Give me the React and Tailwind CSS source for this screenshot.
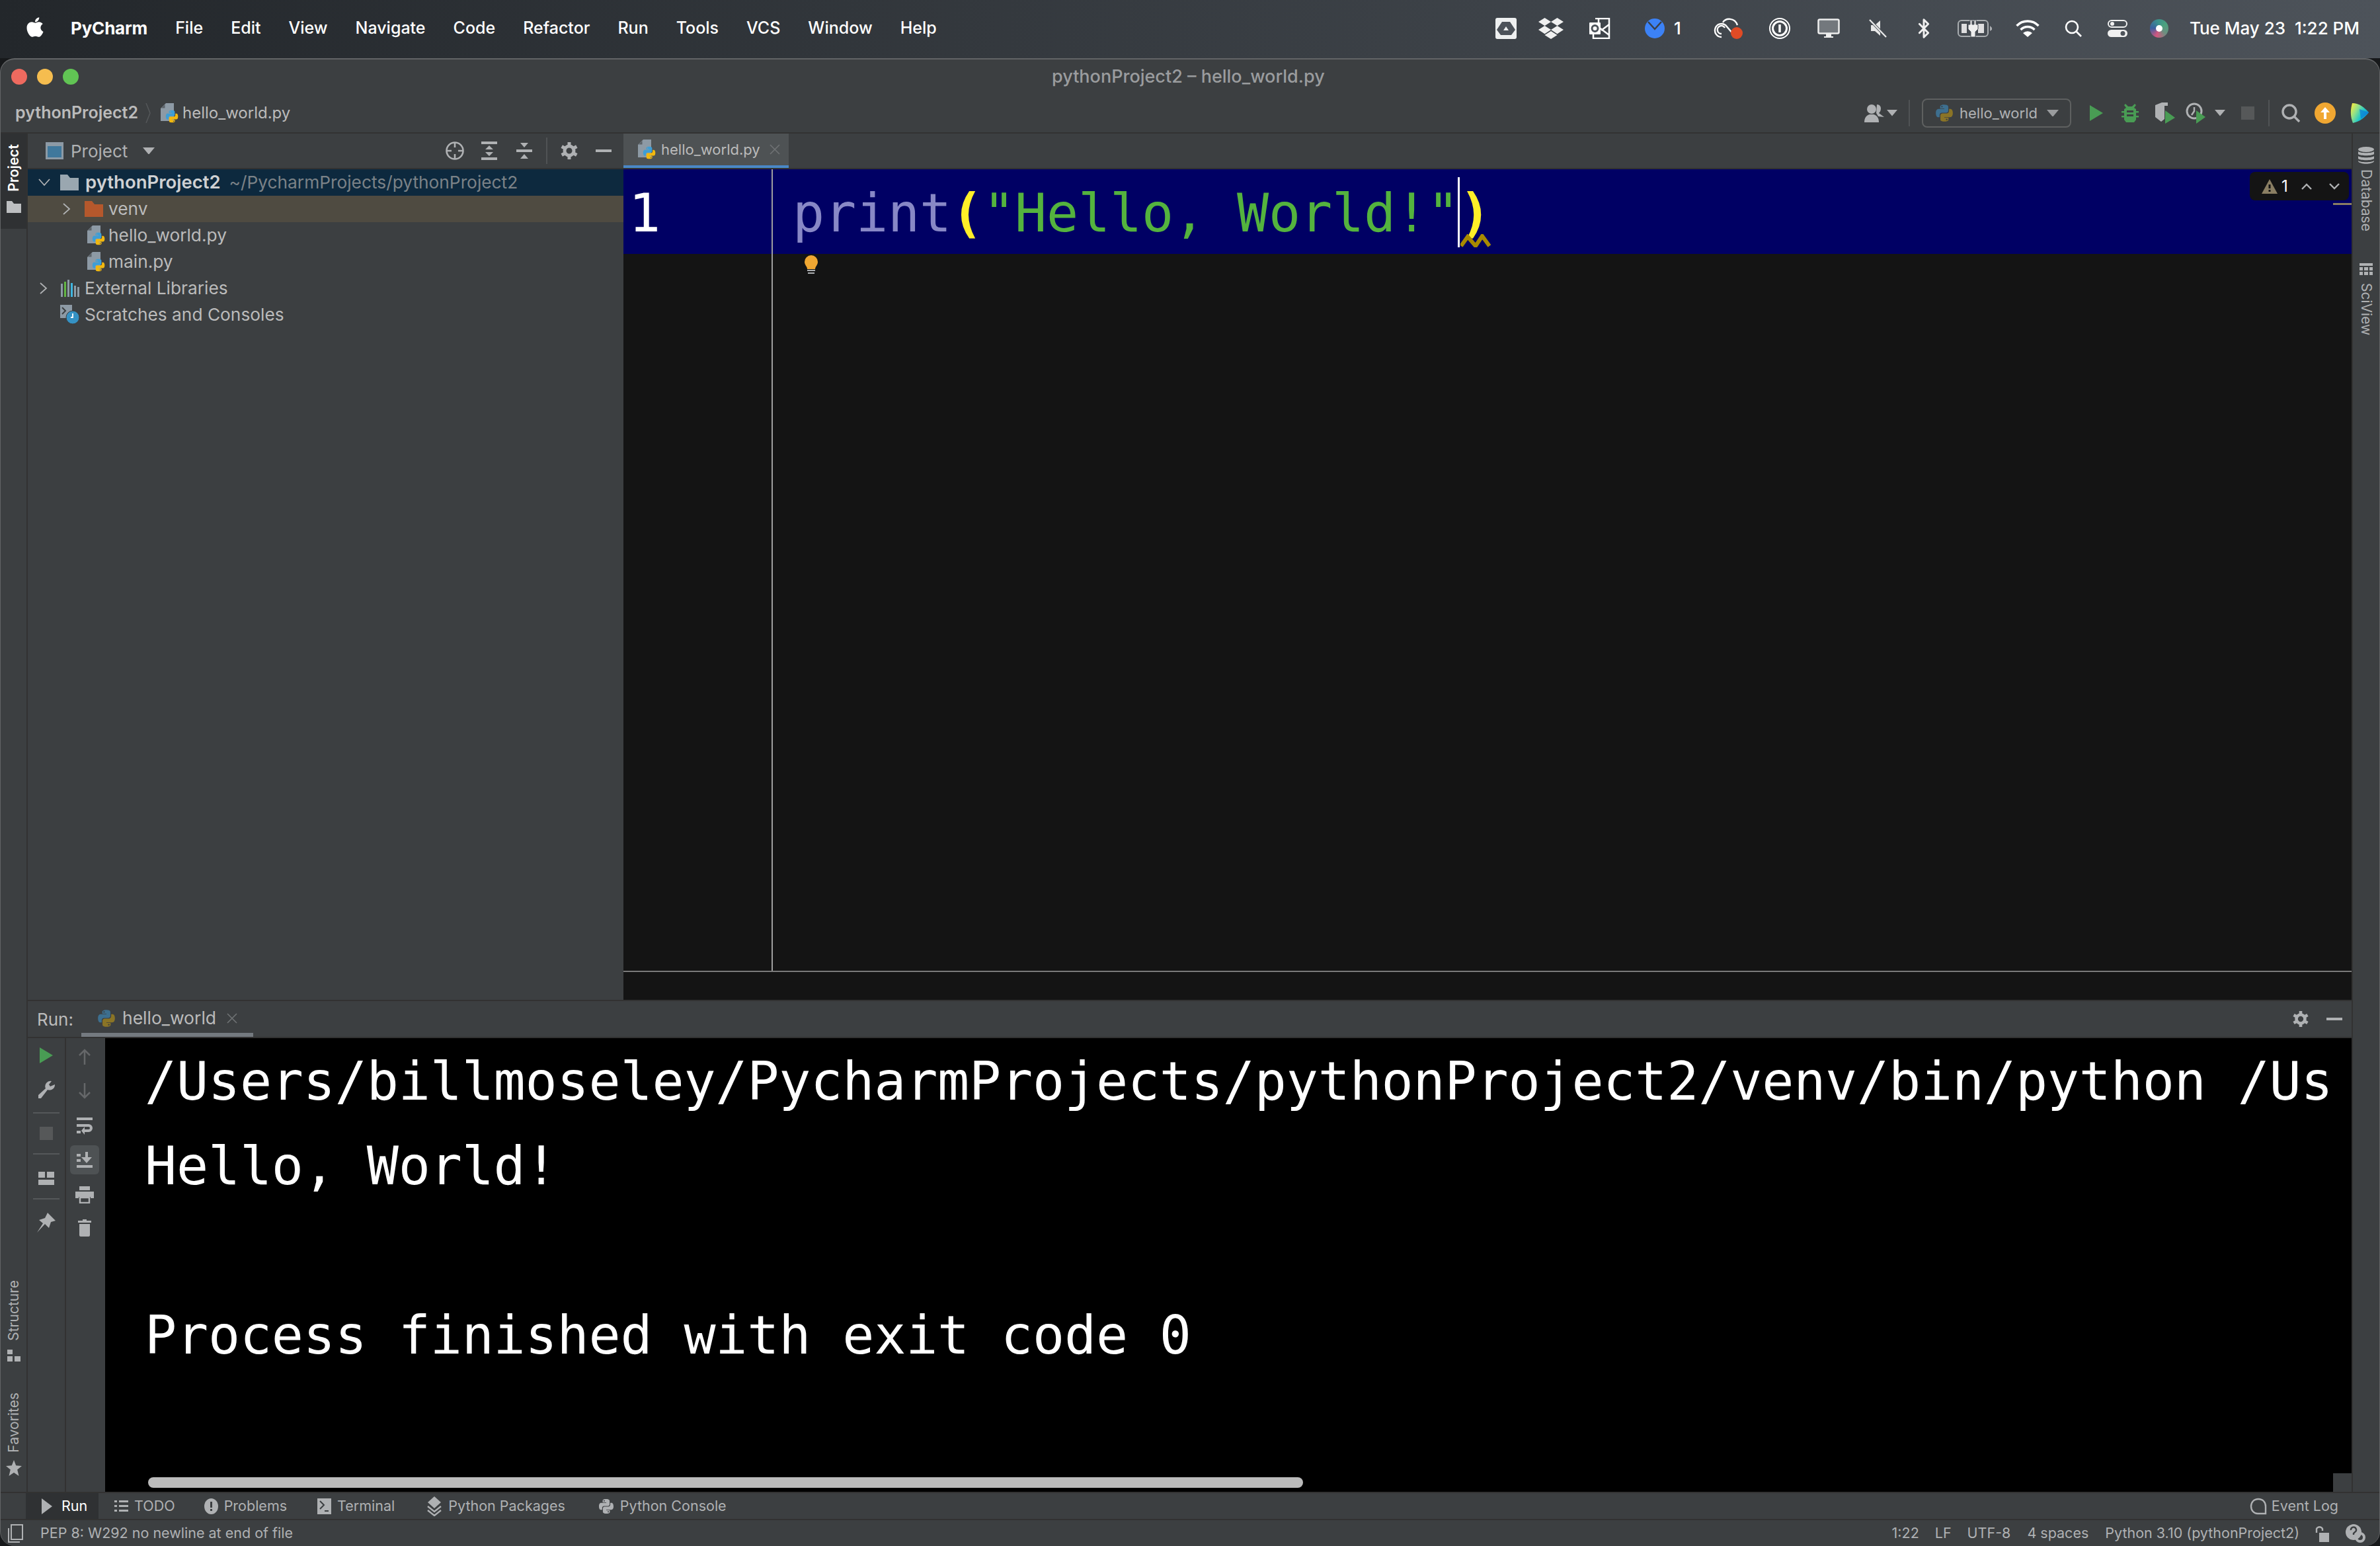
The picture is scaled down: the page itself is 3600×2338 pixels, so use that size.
import React from 'react';
import { FaApple, FaDropbox } from 'react-icons/fa';
import { Bluetooth } from 'lucide-react';

const Snake = ({ c }) => (
  <path fill={c} d="M11.9 1C6.3 1 6.6 3.4 6.6 3.4v2.5h5.4v.8H4.5S1 6.3 1 11.9s3.1 5.4 3.1 5.4h1.8v-2.6s-.1-3.1 3-3.1h5.3s2.9 0 2.9-2.8V3.9S17.6 1 11.9 1zM8.9 2.7a1 1 0 1 1 0 2 1 1 0 0 1 0-2z" />
);
const Py = ({ size = 28, a = '#3d6f8f', b = '#8a7426', className = '' }) => (
  <svg width={size} height={size} viewBox="0 0 24 24" className={className}>
    <Snake c={a} />
    <g transform="rotate(180 12 12)"><Snake c={b} /></g>
  </svg>
);
const PyFile = ({ className = '' }) => (
  <svg width="27" height="30" viewBox="0 0 27 30" className={className}>
    <path fill="#8d9aa5" d="M8 0h12v27H0V8z" />
    <path fill="#3c3f41" d="M6.500 2v5.500H1z" opacity="0.6" />
    <g transform="translate(7 10) scale(0.84)">
      <Snake c="#3d9ed6" />
      <g transform="rotate(180 12 12)"><Snake c="#f1b80f" /></g>
    </g>
  </svg>
);
const Arrow = ({ className = '', w = 18, c = '#afb1b3' }) => (
  <svg width={w} height={w * 0.6} viewBox="0 0 10 6" className={className}><path fill={c} d="M0 0h10L5 6z" /></svg>
);
const ChevronDown = ({ className = '' }) => (
  <svg width="18" height="12" viewBox="0 0 18 12" className={className} fill="none" stroke="#afb1b3" strokeWidth="1.800"><path d="M1 1l8 9 8-9" /></svg>
);
const ChevronRight = ({ className = '' }) => (
  <svg width="12" height="18" viewBox="0 0 12 18" className={className} fill="none" stroke="#afb1b3" strokeWidth="1.800"><path d="M1 1l9 8-9 8" /></svg>
);
const Gear = ({ s = 26, className = '' }) => (
  <svg width={s} height={s} viewBox="0 0 26 26" className={className}>
    <circle cx="13" cy="13" r="7" fill="none" stroke="#afb1b3" strokeWidth="5" />
    <g stroke="#afb1b3" strokeWidth="5">
      <path d="M13 0v5M13 21v5M1.700 6.500L6 9M20 17l4.300 2.500M1.700 19.500L6 17M20 9l4.300-2.500" />
    </g>
  </svg>
);
const Minus = ({ className = '' }) => <div className={`w-6 h-1 bg-[#afb1b3] ${className}`} />;
const Folder = ({ c = '#9aa7b0', className = '' }) => (
  <svg width="28" height="24" viewBox="0 0 28 24" className={className}><path fill={c} d="M0 0h11l4 5h13v19H0z" /></svg>
);

function MenuBar() {
  const items = ['File', 'Edit', 'View', 'Navigate', 'Code', 'Refactor', 'Run', 'Tools', 'VCS', 'Window', 'Help'];
  return (
    <div className="h-[88px] shrink-0 flex items-center text-white text-[25px] font-medium bg-gradient-to-r from-[#23272b] to-[#4d535a] pb-[3px]">
      <FaApple className="ml-[36px] text-[34px] mb-1" />
      <span className="ml-[37px] font-bold text-[26px] tracking-[-0.2px]">PyCharm</span>
      {items.map((t) => <span key={t} className="ml-[42px]">{t}</span>)}
      <div className="ml-auto flex items-center">
        <svg width="32" height="32" viewBox="0 0 32 32"><rect width="32" height="32" rx="3" fill="#eef0f0" /><path fill="#4d535a" d="M10 6h12l8 12-6 8H8l-6-8z" /><path fill="#eef0f0" d="M16 13l4 6h-8z" /></svg>
        <FaDropbox className="ml-[33px] text-[38px] text-[#f0f0f0]" />
        <svg width="32" height="32" viewBox="0 0 32 32" className="ml-[39px]" fill="none" stroke="#fff" strokeWidth="2.500"><path d="M9 1h21v30H6V20" /><path d="M14 1v10M14 14l16 12M30 10L18 19" /><rect x="0" y="7" width="17" height="18" rx="1" fill="#fff" stroke="none" /><circle cx="8.500" cy="16" r="4.500" stroke="#4d535a" strokeWidth="3" /></svg>
        <svg width="30" height="30" viewBox="0 0 30 30" className="ml-[52px]"><circle cx="15" cy="15" r="15" fill="#3c82f6" /><path d="M5 5l10 11L25 5" fill="none" stroke="#3a3f46" strokeWidth="2.500" /></svg>
        <span className="ml-[14px] w-[14px] text-[26px]">1</span>
        <svg width="48" height="34" viewBox="0 0 48 34" className="ml-[46px]" fill="none" stroke="#fff" strokeWidth="2.400"><path d="M12 30a10 10 0 1 1 6-18l12 14" /><path d="M12 25a6 6 0 1 1 5-9" /><path d="M14 8c4-7 18-8 22 4" /><circle cx="35" cy="24" r="9" fill="#e04b25" stroke="none" /></svg>
        <svg width="32" height="32" viewBox="0 0 32 32" className="ml-[36px]" fill="none" stroke="#fff"><circle cx="16" cy="16" r="15" strokeWidth="2" /><circle cx="16" cy="16" r="10.500" strokeWidth="3" /><path d="M16 10v12" strokeWidth="3.500" /></svg>
        <svg width="34" height="30" viewBox="0 0 34 30" className="ml-[41px]"><rect x="1.500" y="1.500" width="31" height="21" rx="2" fill="#73787d" stroke="#eee" strokeWidth="2.500" /><path fill="#eee" d="M13 23h8v4h3v2H10v-2h3z" /></svg>
        <svg width="28" height="28" viewBox="0 0 28 28" className="ml-[44px]"><path fill="#e8e8e8" d="M3 9h6l8-7v23l-8-7H3z" /><path d="M1 1l25 26" stroke="#4d535a" strokeWidth="4" /><path d="M1 1l25 26" stroke="#eee" strokeWidth="2" /></svg>
        <Bluetooth size={32} color="#f0f0f0" strokeWidth={2.2} className="ml-[39px]" />
        <svg width="52" height="26" viewBox="0 0 52 26" className="ml-[35px]"><rect x="1" y="1" width="45" height="24" rx="5" fill="none" stroke="#a9adb0" strokeWidth="2" /><path fill="#a9adb0" d="M49 9l3 3v3l-3 2z" /><path fill="#eee" d="M6 6h8v14H6zM31 6h9v14h-9z" opacity="0.9" /><path fill="#eee" stroke="#4d535a" strokeWidth="1" d="M19 0h3v7h3V0h3v7h3v7l-4 4v8h-7v-8l-4-4V7h3z" /></svg>
        <svg width="36" height="26" viewBox="0 0 36 26" className="ml-[36px]" fill="none" stroke="#fff" strokeWidth="3.400"><path d="M1.500 9a23 23 0 0 1 33 0" /><path d="M7.500 15a14.500 14.500 0 0 1 21 0" /><path fill="#fff" stroke="none" d="M11 20a10 10 0 0 1 14 0l-7 6z" /></svg>
        <svg width="26" height="26" viewBox="0 0 26 26" className="ml-[38px]" fill="none" stroke="#fff" strokeWidth="2.600"><circle cx="11" cy="11" r="9" /><path d="M17 17l8 8" /></svg>
        <svg width="30" height="26" viewBox="0 0 30 26" className="ml-[39px]"><rect x="1" y="1" width="28" height="10" rx="5" fill="none" stroke="#f0f0f0" strokeWidth="2" /><circle cx="7" cy="6" r="3" fill="#f0f0f0" /><rect y="15" width="30" height="11" rx="5.500" fill="#f0f0f0" /><circle cx="23" cy="20.500" r="3.500" fill="#4d535a" /></svg>
        <div className="ml-[34px] w-[28px] h-[28px] rounded-full bg-[conic-gradient(from_200deg,#d4577f,#3b5f9f,#3b8f8f,#4ba27e,#6b8f7f,#d4577f)] flex items-center justify-center">
          <div className="w-[10px] h-[10px] rounded-full bg-white" />
        </div>
        <span className="ml-[32px] mr-[31px] whitespace-pre text-[26px]">Tue May 23  1:22 PM</span>
      </div>
    </div>
  );
}

function NavBar() {
  return (
    <div className="h-[58px] shrink-0 flex items-center border-b-2 border-[#323232] box-content text-[24px] text-[#bbbbbb]">
      <span className="ml-[22px] font-semibold text-[25px]">pythonProject2</span>
      <svg width="8" height="30" viewBox="0 0 8 30" className="ml-[11px]" fill="none" stroke="#55585a" strokeWidth="1.500"><path d="M1 0l6 15-6 15" /></svg>
      <PyFile className="ml-[15px]" />
      <span className="ml-[6px]">hello_world.py</span>
      <div className="ml-auto flex items-center h-full">
        <svg width="30" height="28" viewBox="0 0 30 28"><circle cx="11" cy="8" r="7" fill="#afb1b3" /><path fill="#afb1b3" d="M0 28c0-8 4-11 8-12h6c4 1 8 4 8 12z" /><path fill="#afb1b3" d="M19 1c4 0 6 3 6 6 0 3-1 5-3 7l8 6-9-1-3-5z" /></svg>
        <Arrow className="ml-[4px]" w={16} />
        <div className="ml-[17px] w-[2px] h-[40px] bg-[#505355]" />
        <div className="ml-[18px] w-[226px] h-[44px] rounded-lg border-2 border-[#5e6060] flex items-center">
          <Py className="ml-[18px]" />
          <span className="ml-[9px] text-[22px] text-[#b0b2b4]">hello_world</span>
          <Arrow className="ml-auto mr-[17px]" w={18} c="#9a9c9e" />
        </div>
        <svg width="20" height="24" viewBox="0 0 20 24" className="ml-[28px]"><path fill="#499c54" d="M0 0l20 12L0 24z" /></svg>
        <svg width="26" height="28" viewBox="0 0 26 28" className="ml-[28px]" fill="#499c54"><path d="M6 0l4 4h6l4-4 2 2-3 4 3 2v16l-3 4H7l-3-4V8l3-2-3-4z" /><path d="M0 11h26v2.500H0zM0 18h26v2.500H0z" /><path d="M8 10h10v3H8zM8 16h10v3H8z" fill="#3c3f41" /></svg>
        <svg width="30" height="32" viewBox="0 0 30 32" className="ml-[25px]"><path fill="#afb1b3" d="M0 4l10-4h9v5h-5v20l-5 4-9-7z" /><path fill="#499c54" d="M15 12l15 11-15 9z" /></svg>
        <svg width="30" height="32" viewBox="0 0 30 32" className="ml-[16px]"><circle cx="13" cy="13" r="11" fill="none" stroke="#afb1b3" strokeWidth="3" /><path d="M13 7v6l-4 6" fill="none" stroke="#afb1b3" strokeWidth="2.500" /><path fill="#499c54" d="M16 12l14 10-14 10z" /></svg>
        <Arrow className="ml-[14px]" w={16} />
        <div className="ml-[24px] w-[20px] h-[20px] bg-[#565859]" />
        <div className="ml-[21px] w-[2px] h-[40px] bg-[#505355]" />
        <svg width="28" height="28" viewBox="0 0 28 28" className="ml-[18px]" fill="none" stroke="#afb1b3" strokeWidth="3.400"><circle cx="12" cy="12" r="10" /><path d="M19 19l8 8" /></svg>
        <svg width="32" height="32" viewBox="0 0 32 32" className="ml-[22px]"><circle cx="16" cy="16" r="16" fill="#f0a732" /><path fill="#fff" d="M16 7l7 8h-5v10h-4V15H9z" /></svg>
        <svg width="28" height="30" viewBox="0 0 28 30" className="ml-[22px] mr-[16px]"><defs><linearGradient id="tb" x1="0" y1="0.1" x2="1" y2="0.7"><stop offset="0" stopColor="#f7ec3e" /><stop offset="0.35" stopColor="#8fe08a" /><stop offset="0.65" stopColor="#1fc8c8" /><stop offset="1" stopColor="#0b7fd8" /></linearGradient></defs><path fill="url(#tb)" d="M3 0c10 0 18 6 25 14-6 8-14 14-24 16C0 20 0 10 3 0z" /><path fill="#0b7fd8" d="M14 9l14 5-12 10z" opacity="0.75" /></svg>
      </div>
    </div>
  );
}

function TreeRow({ bg = '', children }) {
  return <div className={`h-[40px] flex items-center text-[26.3px] text-[#bbbbbb] ${bg}`}>{children}</div>;
}

function ProjectPanel() {
  return (
    <div className="w-[901px] shrink-0 flex flex-col">
      <div className="h-[54px] shrink-0 flex items-center border-b-2 border-[#323232] box-border text-[26px] text-[#afb1b3]">
        <svg width="27" height="26" viewBox="0 0 27 26" className="ml-[27px]"><rect width="27" height="26" fill="#8d9aa5" /><rect x="3" y="6" width="21" height="17" fill="#40789c" /></svg>
        <span className="ml-[11px]">Project</span>
        <Arrow className="ml-[23px]" w={18} />
        <svg width="28" height="28" viewBox="0 0 28 28" className="ml-[440px]" fill="none" stroke="#afb1b3" strokeWidth="2.600"><circle cx="14" cy="14" r="12.500" /><path d="M14 1v8M14 19v8M1 14h8M19 14h8" /></svg>
        <svg width="24" height="28" viewBox="0 0 24 28" className="ml-[26px]" fill="#afb1b3"><path d="M0 0h24v4H0zM0 24h24v4H0zM12 6l6 6H6zM12 22l-6-6h12z" /></svg>
        <svg width="24" height="28" viewBox="0 0 24 28" className="ml-[29px]" fill="#afb1b3"><path d="M0 12h24v4H0zM6 2h12l-6 7zM12 19l6 7H6z" /></svg>
        <div className="ml-[21px] w-[2px] h-[40px] bg-[#505355]" />
        <Gear className="ml-[20px]" />
        <Minus className="ml-[27px]" />
      </div>
      <div className="flex-1 flex flex-col">
        <TreeRow bg="bg-[#0d293e]">
          <ChevronDown className="ml-[16px]" />
          <Folder className="ml-[15px]" />
          <span className="ml-[10px] font-semibold text-[27.500px] text-[#cfd1d3]">pythonProject2</span>
          <span className="ml-[13px] text-[#7b8287]">~/PycharmProjects/pythonProject2</span>
        </TreeRow>
        <TreeRow bg="bg-[#4f4b41]">
          <ChevronRight className="ml-[53px]" />
          <Folder c="#b5582c" className="ml-[21px]" />
          <span className="ml-[8px]">venv</span>
        </TreeRow>
        <TreeRow><PyFile className="ml-[90px]" /><span className="ml-[5px]">hello_world.py</span></TreeRow>
        <TreeRow><PyFile className="ml-[90px]" /><span className="ml-[5px]">main.py</span></TreeRow>
        <TreeRow>
          <ChevronRight className="ml-[18px]" />
          <svg width="28" height="26" viewBox="0 0 28 26" className="ml-[20px]"><rect x="0" y="6" width="3" height="20" fill="#8d9aa5" /><rect x="5" y="3" width="3" height="23" fill="#62b543" /><rect x="10" y="0" width="3" height="26" fill="#8d9aa5" /><rect x="15" y="5" width="3" height="21" fill="#40b6e0" /><rect x="20" y="9" width="3" height="17" fill="#8d9aa5" /><rect x="25" y="11" width="3" height="15" fill="#8d9aa5" /></svg>
          <span className="ml-[8px]">External Libraries</span>
        </TreeRow>
        <TreeRow>
          <svg width="30" height="30" viewBox="0 0 30 30" className="ml-[49px]"><path fill="#8d9aa5" d="M0 0h18v20H0z" /><path d="M3 4l5 5-5 5" fill="none" stroke="#3c3f41" strokeWidth="2" /><circle cx="19" cy="19" r="10" fill="#3592c4" stroke="#3c3f41" strokeWidth="1" /><path d="M19 13v6h-3" fill="none" stroke="#fff" strokeWidth="1.800" /></svg>
          <span className="ml-[7px]">Scratches and Consoles</span>
        </TreeRow>
      </div>
    </div>
  );
}

function Editor() {
  return (
    <div className="flex-1 min-w-0 flex flex-col">
      <div className="h-[54px] shrink-0 flex border-b-2 border-[#323232] box-border">
        <div className="w-[250px] bg-[#4e5254] border-b-[4px] border-[#4a88c7] flex items-center text-[22px] text-[#bbbbbb]">
          <PyFile className="ml-[22px]" />
          <span className="ml-[8px]">hello_world.py</span>
          <svg width="16" height="16" viewBox="0 0 16 16" className="ml-[14px]" stroke="#6f7274" strokeWidth="1.600"><path d="M1 1l14 14M15 1L1 15" /></svg>
        </div>
      </div>
      <div className="relative flex-1 bg-[#141414] flex flex-col font-['DejaVu_Sans_Mono',monospace] text-[80px] tracking-[-0.16px]">
        <div className="h-[128px] shrink-0 bg-[#000064] flex leading-[134px]">
          <div className="w-[226px] shrink-0 border-r-2 border-[#a0a0a0] pl-[8px] text-white">1</div>
          <div className="pl-[30px] relative whitespace-pre">
            <span className="text-[#8888c6]">print</span><span className="text-[#ffef28] font-bold">(</span><span className="text-[#54b33e]">"Hello, World!"</span><span className="text-[#ffef28] font-bold">)</span>
            <span className="absolute left-[1036px] top-[12px] w-[3px] h-[106px] bg-white" />
            <svg width="46" height="20" viewBox="0 0 46 20" className="absolute left-[1040px] top-[98px]" fill="none" stroke="#a88a00" strokeWidth="6"><path d="M1 18L11 4l12 14L33 3l11 15" /></svg>
          </div>
        </div>
        <div className="flex-1 flex">
          <div className="w-[226px] shrink-0 border-r-2 border-[#a0a0a0]" />
          <svg width="20" height="30" viewBox="0 0 20 30" className="ml-[48px] mt-[2px]"><path fill="#f0a732" d="M10 0a10 10 0 0 1 10 10c0 5-4 7-4 11H4c0-4-4-6-4-11A10 10 0 0 1 10 0z" /><path fill="#afb1b3" d="M4 22h12v2H4zM5 26h10v2H5z" /></svg>
        </div>
        <div className="h-[2px] shrink-0 bg-[#7a7a7a]" />
        <div className="h-[42px] shrink-0" />
        <div className="absolute right-[4px] top-[4px] w-[150px] h-[43px] rounded-lg bg-[#141414] flex items-center font-['Inter',sans-serif] text-[24px] tracking-normal text-white">
          <svg width="24" height="22" viewBox="0 0 24 22" className="ml-[18px]"><path fill="#8a7e63" d="M12 0l12 22H0z" /><path fill="#141414" d="M10.500 8h3v6h-3zM10.500 16h3v3h-3z" /></svg>
          <span className="ml-[6px] leading-none">1</span>
          <svg width="16" height="10" viewBox="0 0 16 10" className="ml-[20px]" fill="none" stroke="#afb1b3" strokeWidth="2.400"><path d="M1 9l7-7 7 7" /></svg>
          <svg width="16" height="10" viewBox="0 0 16 10" className="ml-[26px]" fill="none" stroke="#afb1b3" strokeWidth="2.400"><path d="M1 1l7 7 7-7" /></svg>
        </div>
        <div className="absolute right-0 top-[51px] w-[28px] h-[3px] bg-[#8a7e63]" />
      </div>
    </div>
  );
}

function SideText({ up, className = '', children }) {
  return <span className={`[writing-mode:vertical-rl] text-[21px] leading-none ${up ? 'rotate-180' : ''} ${className}`}>{children}</span>;
}

function LeftStripe() {
  return (
    <div className="w-[39px] shrink-0 flex flex-col items-center border-r-2 border-[#323232] box-content text-[#afb1b3]">
      <div className="w-full h-[144px] bg-[#2f3133] flex flex-col items-center pt-[16px]">
        <SideText up className="text-white font-semibold">Project</SideText>
        <svg width="22" height="18" viewBox="0 0 22 18" className="mt-[14px]"><path fill="#bdbfc1" d="M0 0h8l3 4h11v14H0z" /></svg>
      </div>
      <SideText up className="mt-auto">Structure</SideText>
      <svg width="20" height="18" viewBox="0 0 20 18" className="mt-[14px]" fill="#afb1b3"><path d="M0 0h8v7H0zM0 10h8v8H0zM11 10h9v8h-9z" /></svg>
      <SideText up className="mt-[47px]">Favorites</SideText>
      <svg width="24" height="24" viewBox="0 0 24 24" className="mt-[11px] mb-[24px]"><path fill="#afb1b3" d="M12 0l3.200 8.200L24 9l-6.800 5.600L19.500 24 12 19l-7.500 5 2.300-9.400L0 9l8.800-.8z" /></svg>
    </div>
  );
}

function RightStripe() {
  return (
    <div className="w-[40px] shrink-0 flex flex-col items-center border-l-2 border-[#323232] box-content text-[#afb1b3] pt-[20px]">
      <svg width="24" height="26" viewBox="0 0 24 26" fill="#afb1b3"><ellipse cx="12" cy="4" rx="12" ry="4" /><path d="M0 7c3 3 21 3 24 0v4c-3 3-21 3-24 0zM0 14c3 3 21 3 24 0v4c-3 3-21 3-24 0zM0 21c3 3 21 3 24 0v1c-3 5-21 5-24 0z" /></svg>
      <SideText className="mt-[8px]">Database</SideText>
      <svg width="20" height="18" viewBox="0 0 20 18" fill="#afb1b3" className="mt-[48px]"><path d="M0 0h20v4H0zM0 6h5v5H0zM7 6h6v5H7zM15 6h5v5h-5zM0 13h5v5H0zM7 13h6v5H7zM15 13h5v5h-5z" /></svg>
      <SideText className="mt-[12px]">SciView</SideText>
    </div>
  );
}

const Sep = () => <div className="w-[40px] h-[2px] bg-[#55585a] my-[20px]" />;

function RunPanel() {
  return (
    <div className="h-[744px] shrink-0 flex flex-col">
      <div className="h-[58px] shrink-0 flex items-center border-y-2 border-[#323232] box-border text-[#bbbbbb] text-[26px]">
        <span className="ml-[14px]">Run:</span>
        <div className="ml-[12px] w-[260px] h-full flex items-center border-b-[6px] border-[#747a80] box-border pt-[4px]">
          <Py className="ml-[24px]" />
          <span className="ml-[10px] text-[26.500px]">hello_world</span>
          <svg width="16" height="16" viewBox="0 0 16 16" className="ml-[16px]" stroke="#6f7274" strokeWidth="1.600"><path d="M1 1l14 14M15 1L1 15" /></svg>
        </div>
        <Gear s={24} className="ml-auto" />
        <Minus className="ml-[27px] mr-[14px]" />
      </div>
      <div className="flex-1 min-h-0 flex">
        <div className="w-[58px] shrink-0 flex flex-col items-center border-r-2 border-[#323232] box-border pt-[14px]">
          <svg width="20" height="24" viewBox="0 0 20 24"><path fill="#499c54" d="M0 0l20 12L0 24z" /></svg>
          <svg width="28" height="28" viewBox="0 0 28 28" className="mt-[26px]" fill="#afb1b3"><path d="M27 6a8 8 0 0 1-11 8L6 27H2v-5l11-10A8 8 0 0 1 22 1l-4 5 2 3z" /></svg>
          <Sep />
          <div className="w-[20px] h-[20px] bg-[#565859]" />
          <Sep />
          <svg width="24" height="20" viewBox="0 0 24 20" className="mt-[6px]" fill="#afb1b3"><path d="M0 0h10v9H0zM13 0h11v9H13zM0 12h24v8H0z" /></svg>
          <Sep />
          <svg width="28" height="30" viewBox="0 0 28 30" fill="#afb1b3"><path d="M16 0l12 12-7 2-3 9-6-6L0 30l9-14-6-5 9-3z" /></svg>
        </div>
        <div className="w-[59px] shrink-0 flex flex-col items-center pt-[16px] pr-[3px]">
          <svg width="20" height="24" viewBox="0 0 20 24" fill="none" stroke="#656769" strokeWidth="2.500"><path d="M10 24V2M2 10l8-8 8 8" /></svg>
          <svg width="20" height="24" viewBox="0 0 20 24" fill="none" stroke="#656769" strokeWidth="2.500" className="mt-[28px]"><path d="M10 0v22M2 14l8 8 8-8" /></svg>
          <svg width="24" height="28" viewBox="0 0 24 28" className="mt-[28px]" fill="#afb1b3"><path d="M0 0h24v4H0zM0 20h6v4H0z" /><path d="M0 10h18a5 5 0 0 1 0 12h-6v4l-5-6 5-6v4h6a1 1 0 0 0 0-4H0z" /></svg>
          <div className="mt-[14px] w-[44px] h-[44px] rounded-md bg-[#4e5254] flex items-center justify-center">
            <svg width="24" height="24" viewBox="0 0 24 24" fill="#afb1b3"><path d="M0 3h6v4H0zM0 11h6v4H0zM0 20h24v4H0zM13 0h4v8h6l-8 9-8-9h6z" /></svg>
          </div>
          <svg width="28" height="26" viewBox="0 0 28 26" className="mt-[18px]" fill="#afb1b3"><path d="M6 0h16v6H6zM0 8h28v10h-5v-2H5v2H0z" /><path d="M7 17h14v8H7z" fill="none" stroke="#afb1b3" strokeWidth="2.400" /></svg>
          <svg width="20" height="26" viewBox="0 0 20 26" className="mt-[24px]" fill="#afb1b3"><path d="M7 0h6v2h7v3H0V2h7zM2 7h16v17a2 2 0 0 1-2 2H4a2 2 0 0 1-2-2z" /></svg>
        </div>
        <div className="relative flex-1 min-w-0 bg-black overflow-hidden pl-[60px] pt-[2px] font-['DejaVu_Sans_Mono',monospace] text-[80px] leading-[128px] tracking-[-0.2px] text-white whitespace-pre">
          <div>/Users/billmoseley/PycharmProjects/pythonProject2/venv/bin/python /Us</div>
          <div>Hello, World!</div>
          <div>&nbsp;</div>
          <div>Process finished with exit code 0</div>
          <div className="absolute left-[65px] top-[664px] w-[1747px] h-[16px] rounded-full bg-[#bbbbbb]" />
          <div className="absolute right-0 bottom-0 w-[28px] h-[28px] bg-[#3c3f41]" />
        </div>
      </div>
    </div>
  );
}

function ToolItem({ icon, className = '', children }) {
  return <div className={`flex items-center ${className}`}>{icon}<span className="ml-[9px]">{children}</span></div>;
}

function BottomBars() {
  return (
    <>
      <div className="h-[41px] shrink-0 flex items-center border-t-2 border-[#323232] box-border text-[21.500px] text-[#afb1b3]">
        <div className="ml-[38px] w-[110px] h-full bg-[#2f3133] flex items-center text-white">
          <svg width="16" height="24" viewBox="0 0 16 24" className="ml-[24px]"><path fill="#afb1b3" d="M0 0l16 12L0 24z" /></svg>
          <span className="ml-[14px]">Run</span>
        </div>
        <ToolItem className="ml-[24px]" icon={<svg width="21" height="20" viewBox="0 0 21 20" fill="#afb1b3"><path d="M0 1h4v3H0zM7 1h14v3H7zM0 8h4v3H0zM7 8h14v3H7zM0 15h4v3H0zM7 15h14v3H7z" /></svg>}>TODO</ToolItem>
        <ToolItem className="ml-[44px]" icon={<svg width="21" height="24" viewBox="0 0 21 24"><ellipse cx="10.500" cy="12" rx="10.500" ry="12" fill="#afb1b3" /><path fill="#3c3f41" d="M9 5h3v9H9zM9 16h3v3H9z" /></svg>}>Problems</ToolItem>
        <ToolItem className="ml-[46px]" icon={<svg width="21" height="24" viewBox="0 0 21 24"><rect width="21" height="24" fill="#afb1b3" /><path d="M4 4l6 6-6 6" stroke="#3c3f41" strokeWidth="2" fill="none" /><path d="M11 18h6v2h-6z" fill="#3c3f41" /></svg>}>Terminal</ToolItem>
        <ToolItem className="ml-[48px]" icon={<svg width="24" height="30" viewBox="0 0 24 30" fill="#afb1b3"><path d="M12 0l10 9-10 9L2 9z" /><path d="M2 15l10 8 10-8M2 21l10 8 10-8" fill="none" stroke="#afb1b3" strokeWidth="2.400" /></svg>}>Python Packages</ToolItem>
        <ToolItem className="ml-[50px]" icon={<Py size={24} a="#afb1b3" b="#afb1b3" />}>Python Console</ToolItem>
        <svg width="26" height="26" viewBox="0 0 26 26" className="ml-auto" fill="none" stroke="#afb1b3" strokeWidth="2.400"><path d="M24 24H12C6 24 2 19 2 13S6 2 13 2s11 5 11 11z" /></svg>
        <span className="ml-[7px] mr-[62px]">Event Log</span>
      </div>
      <div className="h-[41px] shrink-0 flex items-center border-t-2 border-[#323232] box-border text-[21.500px] text-[#afb1b3]">
        <svg width="24" height="28" viewBox="0 0 24 28" className="ml-[10px]" fill="none" stroke="#afb1b3" strokeWidth="2"><rect x="6" y="1" width="17" height="22" /><path d="M2 6v21h17" /></svg>
        <span className="ml-[26px]">PEP 8: W292 no newline at end of file</span>
        <span className="ml-auto">1:22</span>
        <span className="ml-[24px]">LF</span>
        <span className="ml-[24px]">UTF-8</span>
        <span className="ml-[25px]">4 spaces</span>
        <span className="ml-[25px]">Python 3.10 (pythonProject2)</span>
        <svg width="22" height="26" viewBox="0 0 22 26" className="ml-[23px]"><path d="M3 12V6a5 5 0 0 1 9 0v3" fill="none" stroke="#afb1b3" strokeWidth="2.400" /><rect x="7" y="12" width="15" height="14" fill="#afb1b3" /></svg>
        <svg width="32" height="30" viewBox="0 0 32 30" className="ml-[24px] mr-[20px]"><circle cx="13" cy="13" r="12" fill="#afb1b3" /><path d="M9 10a4 4 0 1 1 6 3l-2 2v2" fill="none" stroke="#3c3f41" strokeWidth="2.400" /><circle cx="23" cy="21" r="6" fill="none" stroke="#afb1b3" strokeWidth="4" /></svg>
      </div>
    </>
  );
}

export default function App() {
  return (
    <div className="w-[3600px] h-[2338px] overflow-hidden bg-[#17191b] flex flex-col font-['Inter','Roboto',sans-serif]">
      <MenuBar />
      <div className="flex-1 min-h-0 flex flex-col bg-[#3c3f41] rounded-[22px] border-t-2 border-x border-[#626466] overflow-hidden">
        <div className="h-[52px] shrink-0 flex items-center text-[27px] font-medium text-[#9a9c9e]">
          <div className="ml-[16px] w-[24px] h-[24px] rounded-full bg-[#ee6a5f]" />
          <div className="ml-[15px] w-[24px] h-[24px] rounded-full bg-[#f5bd4f]" />
          <div className="ml-[15px] w-[24px] h-[24px] rounded-full bg-[#61c454]" />
          <span className="ml-[1472px]">pythonProject2 – hello_world.py</span>
        </div>
        <NavBar />
        <div className="flex-1 min-h-0 flex">
          <LeftStripe />
          <div className="flex-1 min-w-0 flex flex-col">
            <div className="flex-1 min-h-0 flex">
              <ProjectPanel />
              <Editor />
            </div>
            <RunPanel />
          </div>
          <RightStripe />
        </div>
        <BottomBars />
      </div>
    </div>
  );
}
